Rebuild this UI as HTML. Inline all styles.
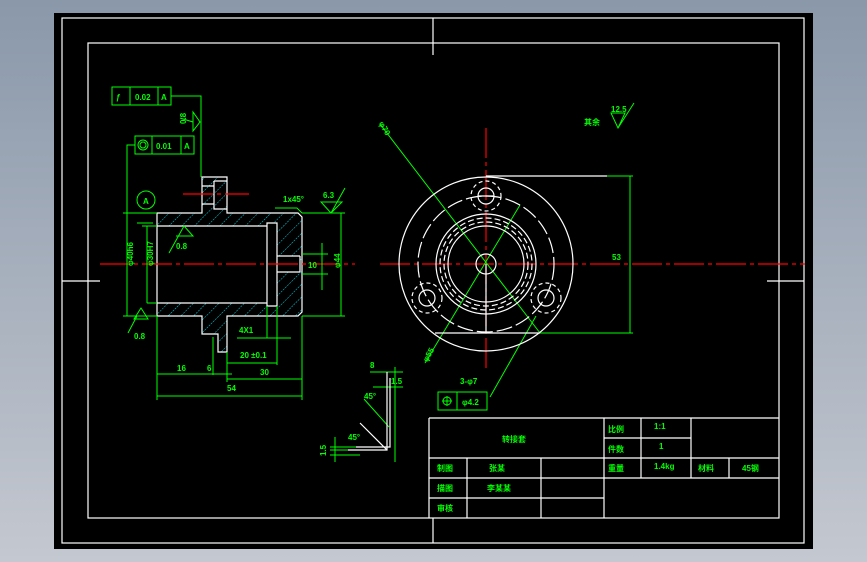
<!DOCTYPE html>
<html><head><meta charset="utf-8"><style>
html,body{margin:0;padding:0;width:867px;height:562px;overflow:hidden;background:linear-gradient(#8a98aa,#c4c8d0);}
svg{display:block}
text{font-family:"Liberation Sans","Noto Sans CJK SC",sans-serif;fill:#00ff00;font-size:8px;font-weight:bold}
</style></head><body>
<svg width="867" height="562" viewBox="0 0 867 562">
<defs>
<pattern id="h" width="9" height="9" patternUnits="userSpaceOnUse" patternTransform="rotate(45)">
<line x1="0" y1="0" x2="0" y2="9" stroke="#00d8e8" stroke-width="1" stroke-dasharray="2,1"/></pattern>
</defs>
<rect x="54" y="13" width="759" height="536" fill="#000"/>
<g fill="none" stroke="#fff" stroke-width="1.2">
<rect x="62" y="18" width="742" height="525"/>
<rect x="88" y="43" width="691" height="475"/>
<line x1="433" y1="18" x2="433" y2="55"/><line x1="62" y1="281" x2="100" y2="281"/>
<line x1="767" y1="281" x2="804" y2="281"/><line x1="433" y1="518" x2="433" y2="543"/>
<!-- title block -->
<line x1="429" y1="418" x2="779" y2="418"/><line x1="429" y1="418" x2="429" y2="518"/>
<line x1="429" y1="458" x2="779" y2="458"/><line x1="429" y1="478" x2="779" y2="478"/>
<line x1="429" y1="498" x2="604" y2="498"/><line x1="604" y1="438" x2="691" y2="438"/>
<line x1="604" y1="418" x2="604" y2="518"/><line x1="641" y1="418" x2="641" y2="478"/>
<line x1="691" y1="418" x2="691" y2="478"/><line x1="729" y1="458" x2="729" y2="478"/>
<line x1="467" y1="458" x2="467" y2="518"/><line x1="541" y1="458" x2="541" y2="518"/>
</g>
<!-- left part -->
<path d="M157,213 H227 V177 H202 V213 M157,213 H298 L302,217 V312 L298,316 H157 Z" fill="url(#h)"/>
<path d="M157,226 H267 V303 H157 Z M267,223 H277 V306 H267 Z M277,256 H300 V272 H277Z" fill="#000"/>
<path d="M202,316 H227 V352 H218 V334 H202Z" fill="url(#h)"/>
<g fill="none" stroke="#fff" stroke-width="1.2">
<path d="M157,213 H202 V177 H227 V213 H298 L302,217 V312 L298,316 H227 V352 H218 V334 H202 V316 H157 Z"/>
<path d="M157,226 H267 V303 H157 M267,223 H277 V306 H267 Z M277,256 H300 M277,272 H300 M300,256 V272"/>
<path d="M202,186 H214 M202,204 H214 M214,181 H227 M214,181 V209 H227"/>
</g>
<g stroke="#f00" stroke-width="1.2" stroke-dasharray="30,4,4,4">
<line x1="100" y1="264" x2="355" y2="264"/><line x1="183" y1="194" x2="249" y2="194"/>
<line x1="380" y1="264" x2="805" y2="264"/><line x1="486" y1="128" x2="486" y2="368"/>
</g>
<g fill="none" stroke="#00ff00" stroke-width="1">
<rect x="112" y="87" width="59" height="18"/><line x1="130" y1="87" x2="130" y2="105"/><line x1="158" y1="87" x2="158" y2="105"/>
<path d="M171,96 H201 V177 M193,122 L180,118 M193,112 V131 L200,122Z"/>
<rect x="135" y="136" width="59" height="18"/><line x1="152" y1="136" x2="152" y2="154"/><line x1="181" y1="136" x2="181" y2="154"/>
<circle cx="143" cy="145" r="5"/><circle cx="143" cy="145" r="3"/>
<path d="M135,145 H127 V316 M123,213 H157 M123,316 H157"/>
<circle cx="146" cy="200" r="9"/>
<path d="M137,223 H153 M142,226 H157 M147,303 H157 M147,226 V303"/>
<path d="M128,333 L137,316 L148,316 L142,316 M134,319 L148,319 L141,308Z"/>
<path d="M169,253 L184,226 L193,236 L176,236"/>
<path d="M302,213 H345 M302,316 H345 M341,213 V316 M302,254 H328 M302,274 H328 M322,243 V290"/>
<path d="M275,208 H297 L302,213 M321,202 H342 L331,213 Z M331,213 L345,188"/>
<path d="M157,316 V400 M302,316 V400 M157,396 H302 M227,352 V382 M157,374 H232 M227,379 H302 M227,363 H277 M267,306 V338 M237,338 H291 M277,306 V365 M213,337 V375"/>
<!-- right view dims -->
<path d="M607,176 H633 M540,333 H633 M630,176 V333"/>
<path d="M380,124 L540,333 M425,363 L520,205 M490,397 L536,316"/>
<rect x="438" y="392" width="49" height="18"/><line x1="457" y1="392" x2="457" y2="410"/>
<circle cx="447" cy="401" r="4"/><path d="M442,401 H452 M447,396 V406"/>
<path d="M611,113 L618,128 L625,113Z M618,128 L634,103"/>
<!-- detail -->
<path d="M370,372 H403 M373,387 H403 M395,367 V462 M364,399 L389,427 M335,437 V462 M330,450 H362 M330,447 H360 M330,455 H360"/>
</g>
<g fill="none" stroke="#fff" stroke-width="1.2">
<circle cx="486" cy="264" r="87"/>
<circle cx="486" cy="264" r="68" stroke-dasharray="16,4"/>
<circle cx="486" cy="264" r="50"/>
<circle cx="486" cy="264" r="46" stroke-dasharray="6,3"/>
<circle cx="486" cy="264" r="42" stroke-dasharray="6,3"/>
<circle cx="486" cy="264" r="38"/>
<circle cx="486" cy="264" r="10"/>
<circle cx="486" cy="196" r="8"/><circle cx="486" cy="196" r="15" stroke-dasharray="4,3"/>
<circle cx="427" cy="298" r="8"/><circle cx="427" cy="298" r="15" stroke-dasharray="4,3"/>
<circle cx="546" cy="298" r="8"/><circle cx="546" cy="298" r="15" stroke-dasharray="4,3"/>
<path d="M486,176 H607 M435,333 H540 M486,264 V333 M478,196 H494"/>
<path d="M387,372 V450 H348 M390,378 V447 H356 M387,450 L360,423"/>
</g>
<g>
<text x="116" y="100">ƒ</text><text x="135" y="100">0.02</text><text x="161" y="100">A</text>
<text x="156" y="149">0.01</text><text x="184" y="149">A</text>
<text x="143" y="204">A</text>
<text x="178" y="124" transform="rotate(-90 182 120)">0.8</text>
<text x="176" y="249">0.8</text><text x="134" y="339">0.8</text>
<text x="323" y="198">6.3</text><text x="283" y="202">1x45°</text>
<text x="120" y="275" transform="rotate(-90 122 264)">φ40h6</text>
<text x="140" y="275" transform="rotate(-90 142 264)">φ30H7</text>
<text x="308" y="268">10</text><text x="330" y="270" transform="rotate(-90 334 264)">φ44</text>
<text x="239" y="333">4X1</text><text x="240" y="358">20 ±0.1</text>
<text x="177" y="371">16</text><text x="207" y="371">6</text><text x="260" y="375">30</text><text x="227" y="391">54</text>
<text x="584" y="125">其余</text><text x="611" y="112">12.5</text>
<text x="380" y="131" transform="rotate(60 386 126)">φ70</text>
<text x="612" y="260">53</text>
<text x="420" y="362" transform="rotate(-60 424 356)">φ55</text>
<text x="460" y="384">3-φ7</text><text x="462" y="405">φ4.2</text>
<text x="370" y="368">8</text><text x="391" y="384">1.5</text><text x="364" y="399">45°</text><text x="348" y="440">45°</text>
<text x="322" y="460" transform="rotate(-90 322 456)">1.5</text>
<text x="502" y="442">转接套</text>
<text x="608" y="432">比例</text><text x="654" y="429">1:1</text>
<text x="608" y="452">件数</text><text x="659" y="449">1</text>
<text x="608" y="471">重量</text><text x="654" y="469">1.4kg</text>
<text x="698" y="471">材料</text><text x="742" y="471">45钢</text>
<text x="437" y="471">制图</text><text x="489" y="471">张某</text>
<text x="437" y="491">描图</text><text x="487" y="491">李某某</text>
<text x="437" y="511">审核</text>
</g>
</svg>
</body></html>
